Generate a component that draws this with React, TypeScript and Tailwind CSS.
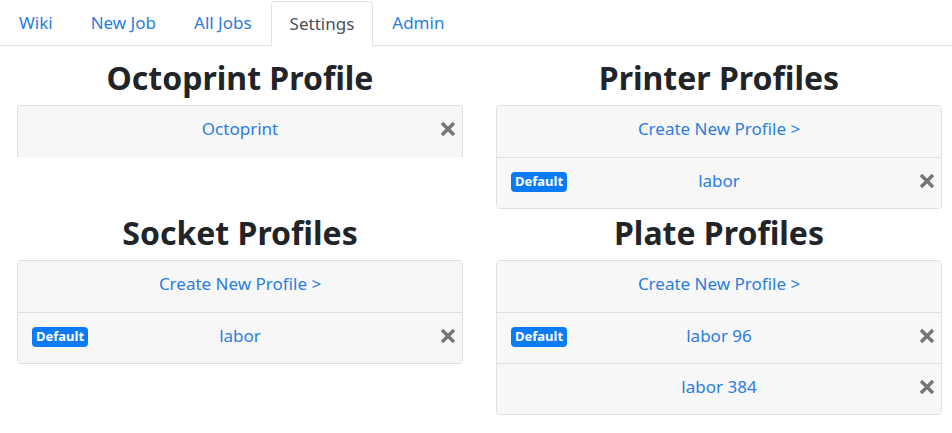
import React from "react";

const font = { fontFamily: '"Noto Sans", "Open Sans", Arial, sans-serif' };

function XIcon() {
  return (
    <svg width="16" height="16" viewBox="0 0 16 16" className="block">
      <path d="M2 2 L14 14 M14 2 L2 14" stroke="#767676" strokeWidth="3.4" strokeLinecap="butt" />
    </svg>
  );
}

function Row({ label, badge, close, first }: { label: string; badge?: boolean; close?: boolean; first?: boolean }) {
  return (
    <div className={`grid grid-cols-[1fr_auto_1fr] items-center h-[51px] px-[6px] pb-[5px] bg-[#f7f7f7] ${first ? "" : "border-t border-[#dfdfdf]"}`}>
      <div className="flex items-center pl-[8px]">
        {badge && (
          <span className="inline-flex items-center justify-center w-[56px] h-[20px] rounded-[4px] bg-[#0a7bf5] text-white text-[13px] font-bold leading-none mt-[2px]">
            Default
          </span>
        )}
      </div>
      <a className="text-[#2b7de0] text-[17px] leading-6">{label}</a>
      <div className="flex justify-end">{close && <XIcon />}</div>
    </div>
  );
}

function Heading({ children }: { children: React.ReactNode }) {
  return <h2 className="text-center text-[32px] font-bold leading-[38px] text-[#212529] mb-[8px]">{children}</h2>;
}

export default function App() {
  const tabs = ["Wiki", "New Job", "All Jobs", "Settings", "Admin"];
  return (
    <div style={font} className="w-[952px] h-[433px] bg-white overflow-hidden">
      <div className="flex border-b border-[#dee2e6] h-[46px] items-end">
        {tabs.map((t) =>
          t === "Settings" ? (
            <div key={t} className="px-[18px] h-[45px] flex items-center border border-b-0 border-[#dee2e6] rounded-t-[4px] bg-white text-[#495057] text-[17px] -mb-px relative">
              {t}
            </div>
          ) : (
            <div key={t} className="px-[18px] h-[45px] flex items-center text-[#2b7de0] text-[17px] border border-transparent">
              {t}
            </div>
          )
        )}
      </div>
      <div className="grid grid-cols-[446px_446px] gap-x-[33px] pl-[17px] pt-[13px]">
        <div>
          <Heading>Octoprint Profile</Heading>
          <div className="border-t border-x border-[#dfdfdf] rounded-t-[4px] overflow-hidden">
            <Row label="Octoprint" close first />
          </div>
        </div>
        <div>
          <Heading>Printer Profiles</Heading>
          <div className="border border-[#dfdfdf] rounded-[4px] overflow-hidden">
            <Row label="Create New Profile >" first />
            <Row label="labor" badge close />
          </div>
        </div>
        <div className="mt-[5px]">
          <Heading>Socket Profiles</Heading>
          <div className="border border-[#dfdfdf] rounded-[4px] overflow-hidden">
            <Row label="Create New Profile >" first />
            <Row label="labor" badge close />
          </div>
        </div>
        <div className="mt-[5px]">
          <Heading>Plate Profiles</Heading>
          <div className="border border-[#dfdfdf] rounded-[4px] overflow-hidden">
            <Row label="Create New Profile >" first />
            <Row label="labor 96" badge close />
            <Row label="labor 384" close />
          </div>
        </div>
      </div>
    </div>
  );
}
